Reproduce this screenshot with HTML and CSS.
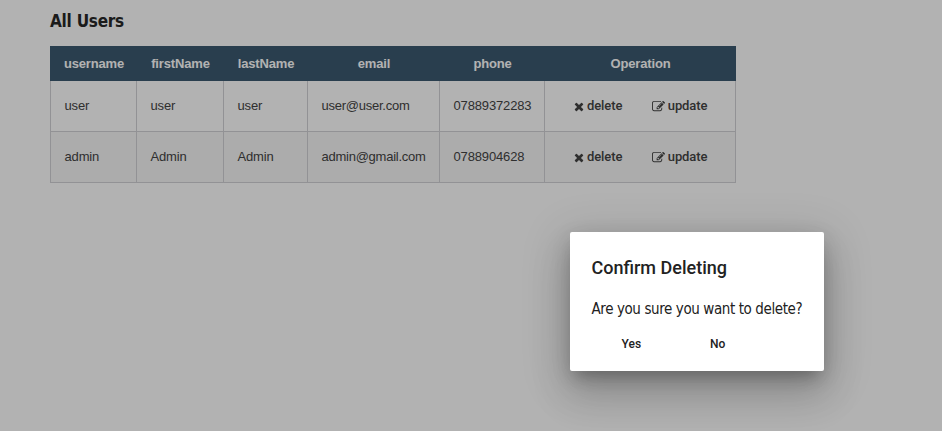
FILE: index.html
```html
<!DOCTYPE html>
<html lang="en">
<head>
<meta charset="utf-8">
<title>All Users</title>
<link rel="stylesheet" href="styles.css">
</head>
<body>
<svg width="0" height="0" class="sprite">
  <symbol id="times" viewBox="0 0 1408 1792"><path d="M1298 1322q0 40-28 68l-136 136q-28 28-68 28t-68-28l-294-294-294 294q-28 28-68 28t-68-28l-136-136q-28-28-28-68t28-68l294-294-294-294q-28-28-28-68t28-68l136-136q28-28 68-28t68 28l294 294 294-294q28-28 68-28t68 28l136 136q28 28 28 68t-28 68l-294 294 294 294q28 28 28 68z"/></symbol>
  <symbol id="edit" viewBox="0 0 1792 1792"><path d="M888 1184l116-116-152-152-116 116v56h96v96h56zm440-720q-16-16-33 1l-350 350q-17 17-1 33t33-1l350-350q17-17 1-33zm80 594v190q0 119-84.500 203.500t-203.500 84.500h-832q-119 0-203.500-84.500t-84.500-203.500v-832q0-119 84.500-203.500t203.500-84.500h832q63 0 117 25 15 7 18 23 3 17-9 29l-49 49q-14 14-32 8-23-6-45-6h-832q-66 0-113 47t-47 113v832q0 66 47 113t113 47h832q66 0 113-47t47-113v-126q0-13 9-22l64-64q15-15 35-7t20 29zm-96-738l288 288-672 672h-288v-288zm444 132l-92 92-288-288 92-92q28-28 68-28t68 28l152 152q28 28 28 68t-28 68z"/></symbol>
</svg>
<main class="page">
  <h3 class="heading">All Users</h3>
  <table class="users">
    <colgroup><col class="c-user"><col class="c-first"><col class="c-last"><col class="c-email"><col class="c-phone"><col class="c-op"></colgroup>
    <thead>
      <tr><th>username</th><th>firstName</th><th>lastName</th><th>email</th><th>phone</th><th>Operation</th></tr>
    </thead>
    <tbody>
      <tr><td>user</td><td>user</td><td>user</td><td class="email">user@user.com</td><td>07889372283</td>
        <td><div class="ops"><button class="op delete"><svg class="times"><use href="#times"/></svg><span>delete</span></button><button class="op update"><svg class="edit"><use href="#edit"/></svg><span>update</span></button></div></td></tr>
      <tr><td>admin</td><td>Admin</td><td>Admin</td><td class="email">admin@gmail.com</td><td>0788904628</td>
        <td><div class="ops"><button class="op delete"><svg class="times"><use href="#times"/></svg><span>delete</span></button><button class="op update"><svg class="edit"><use href="#edit"/></svg><span>update</span></button></div></td></tr>
    </tbody>
  </table>
</main>
<div class="backdrop"></div>
<div class="dialog" role="dialog">
  <h2 class="title">Confirm Deleting</h2>
  <p class="message">Are you sure you want to delete?</p>
  <div class="actions"><button class="yes">Yes</button><button class="no">No</button></div>
</div>
</body>
</html>
```
FILE: styles.css
```css
* { box-sizing: border-box; }
body { margin: 0; height: 431px; overflow: hidden; background: #fff; }
button { border: 0; padding: 0; background: none; font: 500 12px/16px Roboto, sans-serif; color: #222; }
.sprite { position: absolute; }
.page { padding: 9px 0 0 50px; }
.heading { margin: 0 0 13px; font: bold 17px/24px "DejaVu Sans Condensed", "DejaVu Sans", sans-serif; font-stretch: condensed; letter-spacing: -0.25px; color: #272727; }
.users { width: 686px; table-layout: fixed; border-collapse: collapse; font: 13px/16px "Liberation Sans", sans-serif; letter-spacing: -0.15px; color: #444; }
.c-user { width: 86px; }
.c-first { width: 87px; }
.c-last { width: 84px; }
.c-email { width: 132px; }
.c-phone { width: 105px; }
.c-op { width: 191px; }
.users th { height: 34px; padding: 0 0 0 1px; border: 1px solid #3b5970; background: #3b5970; color: #fff; text-align: center; }
.users td { height: 51px; padding: 0 0 1px 13.5px; border: 1px solid #d1d1d6; white-space: nowrap; }
.users .email { letter-spacing: -0.25px; }
.users tbody tr:nth-child(even) { background: #f6f6f6; }
.ops { display: flex; padding-left: 15.5px; }
.op { display: flex; align-items: center; font-size: 13px; letter-spacing: -0.1px; color: #444; }
.op svg { fill: #444; }
.times { width: 10px; height: 13px; margin: 1px 3px 0 0; }
.edit { width: 13px; height: 13px; margin: 1px 3px 0 0; }
.update { margin-left: 29.5px; }
.backdrop { position: absolute; inset: 0; background: rgba(0, 0, 0, .3); }
.dialog { position: absolute; left: 570px; top: 232px; width: 254px; height: 139px; padding: 24px 21px 0 21.5px; border-radius: 2px; background: #fff; color: #222; box-shadow: 0 11px 15px -7px rgba(0,0,0,.2), 0 24px 38px 3px rgba(0,0,0,.14), 0 9px 46px 8px rgba(0,0,0,.12), 0 6px 20px rgba(0,0,0,.12); }
.title { margin: 0 0 18px; font: 500 18px/24px Roboto, sans-serif; }
.message { margin: 0; font: 15px/22px "DejaVu Sans Condensed", "DejaVu Sans", sans-serif; font-stretch: condensed; letter-spacing: -0.4px; white-space: nowrap; }
.actions { display: flex; padding: 16px 0 0 30px; }
.no { margin-left: 69px; }
```
